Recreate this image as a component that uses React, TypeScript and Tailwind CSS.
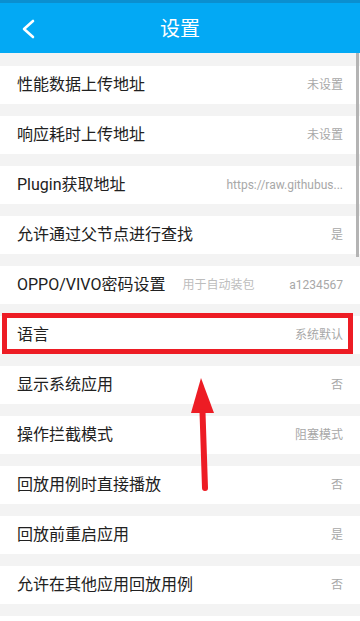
import React from 'react';

type Row = { label: string; value: string; hint?: string; mark?: boolean };

const ROWS: Row[] = [
  { label: '性能数据上传地址', value: '未设置' },
  { label: '响应耗时上传地址', value: '未设置' },
  { label: 'Plugin获取地址', value: 'https://raw.githubus...' },
  { label: '允许通过父节点进行查找', value: '是' },
  { label: 'OPPO/VIVO密码设置', value: 'a1234567', hint: '用于自动装包' },
  { label: '语言', value: '系统默认', mark: true },
  { label: '显示系统应用', value: '否' },
  { label: '操作拦截模式', value: '阻塞模式' },
  { label: '回放用例时直接播放', value: '否' },
  { label: '回放前重启应用', value: '是' },
  { label: '允许在其他应用回放用例', value: '否' },
  { label: '', value: '' },
];

const SettingRow = ({ row }: { row: Row }) => (
  <div className="relative flex h-[38px] items-center bg-white pl-[17px] pr-[17px]">
    <span className="text-[16px] text-[#212121] whitespace-nowrap">{row.label}</span>
    {row.hint && <span className="ml-[17px] text-[12px] text-[#bdbdbd] whitespace-nowrap">{row.hint}</span>}
    <span className="ml-auto text-[12px] text-[#a8a8a8] whitespace-nowrap">{row.value}</span>
    {row.mark && (
      <div className="absolute left-[2px] top-[-3px] h-[41px] w-[351px] border-[5px] border-[#ed1c24]" />
    )}
  </div>
);

export default function App() {
  return (
    <div
      className="relative h-[621px] w-[360px] overflow-hidden bg-[#f3f3f3]"
      style={{ fontFamily: 'Roboto, "Noto Sans CJK SC", sans-serif' }}
    >
      <div className="h-[3px] bg-[#0b8fd0]" />
      <header className="relative flex h-[50px] items-center justify-center bg-[#03a9f4]">
        <svg className="absolute left-[20px] top-[15px]" width="16" height="22" viewBox="0 0 16 22" fill="none">
          <path d="M13 3 L4 11 L13 19" stroke="white" strokeWidth="2.6" strokeLinecap="round" strokeLinejoin="round" />
        </svg>
        <span className="pt-[2px] text-[20px] text-white">设置</span>
      </header>

      <div className="flex flex-col gap-[12px] pt-[13px]">
        {ROWS.map((r, i) => (
          <SettingRow key={i} row={r} />
        ))}
      </div>

      {/* scrollbar */}
      <div className="absolute right-[1px] top-[53px] h-[204px] w-[3px] bg-[#b4b4b4]" />

      {/* annotation arrow */}
      <svg className="absolute left-[188px] top-[376px]" width="30" height="118" viewBox="0 0 30 118" fill="none">
        <path d="M13 2 L26 37 L3 37 Z" fill="#ed1c24" />
        <path d="M14.5 36 L17 112" stroke="#ed1c24" strokeWidth="6" strokeLinecap="round" />
      </svg>
    </div>
  );
}
